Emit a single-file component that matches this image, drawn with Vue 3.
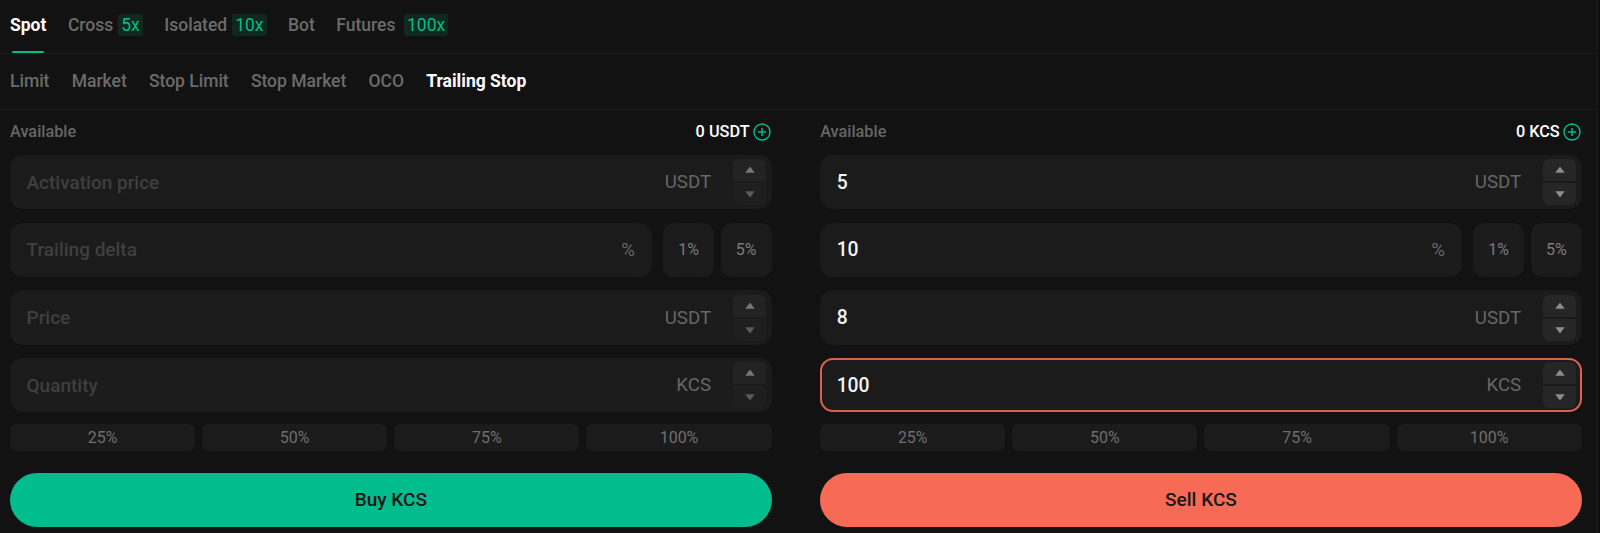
<script setup>
const tabs = [
  { name: 'Spot', active: true },
  { name: 'Cross', badge: '5x' },
  { name: 'Isolated', badge: '10x' },
  { name: 'Bot' },
  { name: 'Futures', badge: '100x', wide: true },
]
const types = ['Limit', 'Market', 'Stop Limit', 'Stop Market', 'OCO', 'Trailing Stop']
const pcts = ['25%', '50%', '75%', '100%']
const forms = [
  {
    unit: 'USDT', action: 'Buy KCS', cls: 'buy',
    fields: [
      { ph: 'Activation price', unit: 'USDT', step: true },
      { ph: 'Trailing delta', unit: '%', quick: true },
      { ph: 'Price', unit: 'USDT', step: true },
      { ph: 'Quantity', unit: 'KCS', step: true },
    ],
  },
  {
    unit: 'KCS', action: 'Sell KCS', cls: 'sell',
    fields: [
      { val: '5', unit: 'USDT', step: true },
      { val: '10', unit: '%', quick: true },
      { val: '8', unit: 'USDT', step: true },
      { val: '100', unit: 'KCS', step: true, error: true },
    ],
  },
]
</script>

<template>
  <div class="page">
    <div class="tabs">
      <div v-for="t in tabs" :key="t.name" class="tab" :class="{ active: t.active }">
        <span>{{ t.name }}</span>
        <span v-if="t.badge" class="badge" :class="{ wide: t.wide }">{{ t.badge }}</span>
      </div>
    </div>
    <div class="types">
      <span v-for="t in types" :key="t" class="type" :class="{ on: t === 'Trailing Stop' }">{{ t }}</span>
    </div>
    <div class="forms">
      <section v-for="f in forms" :key="f.cls" class="form">
        <div class="avail">
          <span class="avail-label">Available</span>
          <span class="avail-val">
            0 {{ f.unit }}
            <svg class="plus" width="18" height="18" viewBox="0 0 18 18" fill="none" stroke="#01bc8d" stroke-width="1.4">
              <circle cx="9" cy="9" r="8" />
              <path d="M9 5v8M5 9h8" stroke-width="1.5" />
            </svg>
          </span>
        </div>
        <div class="fields">
          <div v-for="(r, i) in f.fields" :key="i" class="row">
            <div class="field" :class="{ error: r.error }">
              <span v-if="r.ph" class="ph">{{ r.ph }}</span>
              <span v-else class="val">{{ r.val }}</span>
              <span class="unit" :class="{ 'unit-pct': r.quick }">{{ r.unit }}</span>
              <div v-if="r.step" class="stepper" :class="{ dim: r.ph }">
                <div class="step up">
                  <svg width="10" height="6" viewBox="0 0 10 6"><path d="M.3 5.8 4.2.6a1 1 0 0 1 1.6 0l3.9 5.2z" /></svg>
                </div>
                <div class="step down">
                  <svg width="10" height="6" viewBox="0 0 10 6"><path d="M.3.2 4.2 5.4a1 1 0 0 0 1.6 0L9.7.2z" /></svg>
                </div>
              </div>
            </div>
            <div v-if="r.quick" class="quicks">
              <div class="quick">1%</div>
              <div class="quick">5%</div>
            </div>
          </div>
        </div>
        <div class="pcts">
          <div v-for="p in pcts" :key="p" class="pct">{{ p }}</div>
        </div>
        <button class="action" :class="f.cls">{{ f.action }}</button>
      </section>
    </div>
  </div>
</template>

<style>
html, body { background: #0d0d0d; }
</style>

<style scoped>
.page {
  width: 1598px;
  height: 533px;
  background: #121212;
  font-family: Roboto, "Liberation Sans", sans-serif;
  color: #fff;
  box-sizing: border-box;
  border-right: 1px solid #1c1c1c;
  overflow: hidden;
}
.tabs {
  height: 54px;
  box-sizing: border-box;
  display: flex;
  gap: 21.5px;
  padding-left: 10px;
  border-bottom: 1px solid #1b1b1b;
}
.tab {
  position: relative;
  display: flex;
  align-items: center;
  gap: 5px;
  padding-bottom: 3px;
  font-size: 17.5px;
  font-weight: 500;
  color: #6b6b6b;
}
.tab.active { color: #fff; font-weight: 700; }
.tab.active::after {
  content: "";
  position: absolute;
  left: 2px;
  right: 2px;
  bottom: 0;
  height: 2px;
  border-radius: 1px;
  background: #01bc8d;
}
.badge {
  height: 22px;
  line-height: 22px;
  padding: 0 3px;
  border-radius: 3px;
  background: #10291f;
  color: #01bc8d;
  font-weight: 400;
  font-size: 17.5px;
}
.badge.wide { margin-left: 3.5px; }
.types {
  height: 56px;
  box-sizing: border-box;
  padding-bottom: 1px;
  display: flex;
  align-items: center;
  gap: 22.2px;
  padding-left: 10px;
  border-bottom: 1px solid #1b1b1b;
}
.type {
  font-size: 17.5px;
  font-weight: 500;
  color: #6b6b6b;
}
.type.on { color: #fff; font-weight: 700; }
.forms {
  display: flex;
  gap: 48.6px;
  padding: 0 15.3px 0 10px;
}
.form { flex: 1; min-width: 0; }
.avail {
  height: 45px;
  box-sizing: border-box;
  padding-bottom: 2px;
  display: flex;
  justify-content: space-between;
  align-items: center;
}
.avail-label { font-size: 16.3px; font-weight: 500; color: #666; }
.avail-val {
  display: flex;
  align-items: center;
  gap: 3.5px;
  font-size: 16.3px;
  font-weight: 500;
}
.plus { margin-right: 0.5px; }
.fields {
  display: flex;
  flex-direction: column;
  gap: 13.3px;
}
.row {
  display: flex;
  gap: 11.3px;
  height: 54.4px;
}
.field {
  flex: 1;
  display: flex;
  align-items: center;
  padding: 0 3.5px 0 14.5px;
  box-sizing: border-box;
  border-radius: 13px;
  background: #1b1b1b;
  border: 2px solid transparent;
}
.field.error { border-color: #dd5f4e; }
.ph {
  font-size: 19px;
  font-weight: 500;
  color: #3f3f3f;
}
.val {
  font-size: 19.3px;
  font-weight: 500;
  color: #f3f3f3;
}
.unit {
  margin-left: auto;
  margin-right: 22px;
  font-size: 18.7px;
  color: #666;
}
.unit-pct { margin-right: 11.5px; }
.stepper {
  width: 33px;
  display: flex;
  flex-direction: column;
  gap: 2px;
}
.step {
  height: 22px;
  display: flex;
  align-items: center;
  justify-content: center;
  background: #262626;
}
.up { border-radius: 6px 6px 1px 1px; }
.down { border-radius: 1px 1px 6px 6px; }
.step svg { fill: #8c8c8c; }
.dim .up { background: #232323; }
.dim .up svg { fill: #777; }
.dim .down { background: #1f1f1f; }
.dim .down svg { fill: #5a5a5a; }
.quicks {
  display: flex;
  gap: 7px;
}
.quick {
  width: 50.7px;
  display: flex;
  align-items: center;
  justify-content: center;
  background: #1b1b1b;
  border-radius: 11px;
  font-size: 16px;
  color: #7b7b7b;
}
.pcts {
  margin-top: 11.5px;
  display: flex;
  gap: 7px;
}
.pct {
  flex: 1;
  height: 27px;
  display: flex;
  align-items: center;
  justify-content: center;
  background: #1b1b1b;
  border-radius: 7px;
  font-size: 16px;
  color: #6e6e6e;
}
.action {
  display: block;
  width: 100%;
  height: 54.2px;
  margin-top: 21.8px;
  border: none;
  border-radius: 28px;
  font-family: inherit;
  font-size: 19px;
  font-weight: 500;
  color: #181818;
}
.buy { background: #01bc8d; }
.sell { background: #f76a56; }
</style>
